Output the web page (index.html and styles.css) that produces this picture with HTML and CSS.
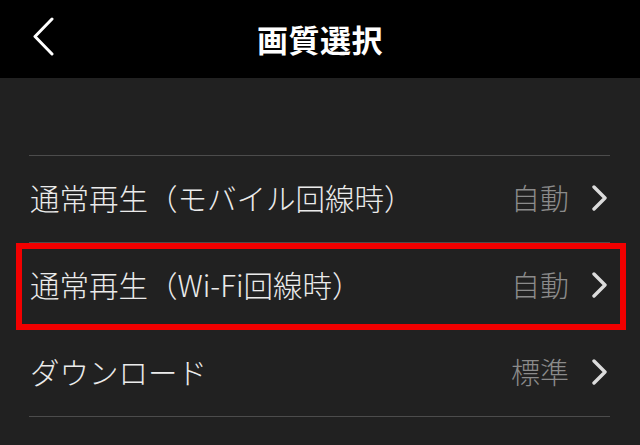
FILE: index.html
```html
<!DOCTYPE html>
<html lang="ja">
<head>
<meta charset="utf-8">
<title>画質選択</title>
<link rel="stylesheet" href="styles.css">
</head>
<body>
<header class="topbar">
  <div class="back">
    <svg class="back-icon" width="24" height="42" viewBox="0 0 24 42">
      <polyline points="19,2 2,19.5 19,37" fill="none" stroke="#ffffff" stroke-width="3" stroke-linecap="round" stroke-linejoin="round"/>
    </svg>
  </div>
  <h1 class="title">画質選択</h1>
  <div class="spacer"></div>
</header>
<main class="content">
  <ul class="list">
    <li class="row">
      <span class="label">通常再生（モバイル回線時）</span>
      <span class="value">自動</span>
      <svg class="chev" width="18" height="26" viewBox="0 0 18 26"><polyline points="3,2 14,13 3,24" fill="none" stroke="#dcdcdc" stroke-width="3.4" stroke-linecap="round" stroke-linejoin="round"/></svg>
    </li>
    <li class="row">
      <span class="label">通常再生（Wi-Fi回線時）</span>
      <span class="value">自動</span>
      <svg class="chev" width="18" height="26" viewBox="0 0 18 26"><polyline points="3,2 14,13 3,24" fill="none" stroke="#dcdcdc" stroke-width="3.4" stroke-linecap="round" stroke-linejoin="round"/></svg>
    </li>
    <li class="row">
      <span class="label">ダウンロード</span>
      <span class="value">標準</span>
      <svg class="chev" width="18" height="26" viewBox="0 0 18 26"><polyline points="3,2 14,13 3,24" fill="none" stroke="#dcdcdc" stroke-width="3.4" stroke-linecap="round" stroke-linejoin="round"/></svg>
    </li>
  </ul>
  <div class="highlight"></div>
</main>
</body>
</html>
```
FILE: styles.css
```css
* { box-sizing: border-box; }
html, body {
  margin: 0;
  padding: 0;
  background: #212121;
  font-family: "Noto Sans CJK JP", "Noto Sans", sans-serif;
  color: #e6e6e6;
  overflow: hidden;
}
.topbar {
  height: 78px;
  background: #000;
  display: grid;
  grid-template-columns: 1fr auto 1fr;
  align-items: center;
}
.back {
  padding-left: 33px;
  display: flex;
  align-items: center;
  padding-bottom: 2px;
}
.back-icon { display: block; }
.title {
  margin: 0;
  font-size: 31px;
  font-weight: 700;
  color: #fff;
  letter-spacing: 0.5px;
  line-height: 1;
  padding-bottom: 2px;
}
.content {
  position: relative;
  padding-top: 77px;
}
.list {
  list-style: none;
  margin: 0 30px 0 29px;
  padding: 0;
  border-top: 1px solid #4c4c4c;
}
.row {
  height: 87px;
  border-bottom: 1px solid #4c4c4c;
  display: flex;
  align-items: center;
  padding-left: 1px;
  padding-right: 1px;
}
.label {
  flex: 1;
  font-size: 29.5px;
  font-weight: 300;
  line-height: 1;
  color: #ebebeb;
  padding-bottom: 3px;
}
.value {
  font-size: 29px;
  font-weight: 300;
  line-height: 1;
  color: #8b8b8b;
  padding-bottom: 3px;
}
.chev {
  display: block;
  margin-left: 22px;
  margin-bottom: 2px;
}
.highlight {
  position: absolute;
  left: 16px;
  top: 165px;
  width: 610px;
  height: 87px;
  border: 6px solid #f20000;
}
```
